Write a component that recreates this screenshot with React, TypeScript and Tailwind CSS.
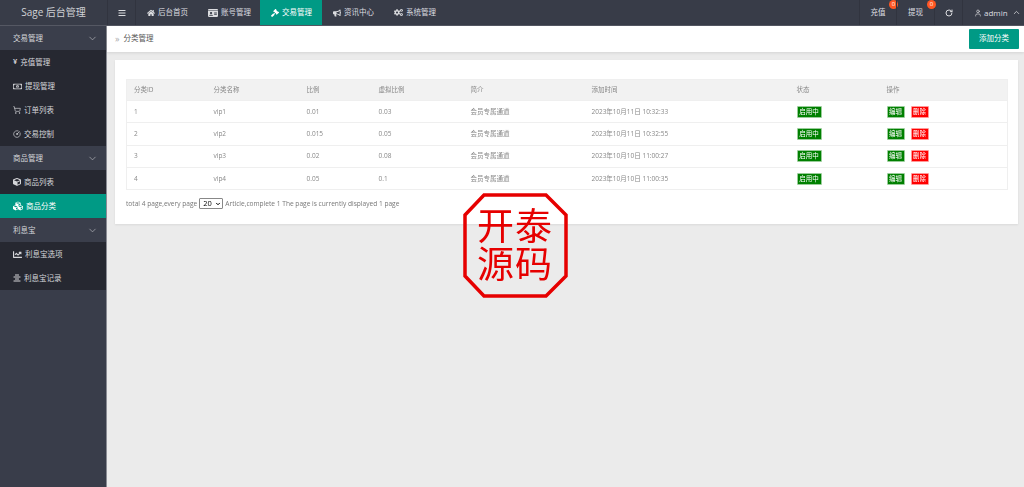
import { ChevronDown, ChevronUp, User, RotateCw, ShoppingCart, CircleGauge } from "lucide-react";
import { FaHome, FaIdCard, FaGavel, FaBullhorn, FaCogs, FaRegMoneyBillAlt, FaCube, FaCubes, FaChartLine, FaBars, FaAlignCenter } from "react-icons/fa";

const font = "font-['Open_Sans','Noto_Sans_CJK_SC',sans-serif]";

const navItems = [
  { label: "后台首页", icon: <FaHome size={8} />, width: "w-[61px]" },
  { label: "账号管理", icon: <FaIdCard size={10} />, width: "w-[63px]" },
  { label: "交易管理", icon: <FaGavel size={8} />, width: "w-[62px]", active: true },
  { label: "资讯中心", icon: <FaBullhorn size={8} />, width: "w-[61px]" },
  { label: "系统管理", icon: <FaCogs size={9} />, width: "w-[63px]" },
];

const rows = [
  { id: 1, name: "vip1", ratio: "0.01", virtual: "0.03", time: "2023年10月11日 10:32:33" },
  { id: 2, name: "vip2", ratio: "0.015", virtual: "0.05", time: "2023年10月11日 10:32:55" },
  { id: 3, name: "vip3", ratio: "0.02", virtual: "0.08", time: "2023年10月10日 11:00:27" },
  { id: 4, name: "vip4", ratio: "0.05", virtual: "0.1", time: "2023年10月10日 11:00:35" },
];

function SideGroup({ label }: { label: string }) {
  return (
    <div className="flex h-6 items-center justify-between bg-[#3a3e4b] pl-[13px] pr-2 text-[7.5px] text-[#d5d6da]">
      <span className="pt-[2px]">{label}</span>
      <ChevronDown size={11} strokeWidth={1.5} className="text-[#b4b6bc]" />
    </div>
  );
}

function SideItem({ label, icon, active }: { label: string; icon: React.ReactNode; active?: boolean }) {
  return (
    <div className={`flex h-6 items-center gap-[3px] pl-[13px] text-[7.5px] text-[#d5d6da] ${active ? "bg-[#009a85] text-white" : "bg-[#262831]"}`}>
      {icon}
      <span className="pt-[2px]">{label}</span>
    </div>
  );
}

function Badge({ color, children, w }: { color: string; children: string; w: string }) {
  return <span className={`inline-flex h-3 items-center justify-center rounded-[1px] border border-white/60 text-[6.5px] text-white ${color} ${w}`}>{children}</span>;
}

export default function App() {
  return (
    <div className={`flex h-screen w-full flex-col overflow-hidden bg-[#ebebeb] ${font}`}>
      {/* top bar */}
      <header className="flex h-[26px] shrink-0 items-stretch border-b border-[#555863] bg-[#383c48] text-[7.5px] text-[#dcdde0]">
        <div className="flex w-[107px] items-center justify-center text-[10px] text-[#d0d2d6]">Sage 后台管理</div>
        <div className="flex w-[29px] items-center justify-center border-x border-[#31343f]">
          <FaBars size={8} />
        </div>
        {navItems.map((item) => (
          <div key={item.label} className={`flex items-center gap-[3px] pl-[11px] ${item.width} ${item.active ? "bg-[#009a85] text-white" : ""}`}>
            {item.icon}
            <span>{item.label}</span>
          </div>
        ))}
        <div className="ml-auto flex items-stretch">
          <div className="relative flex w-[37px] items-center justify-center border-l border-[#31343f]">
            充值
            <span className="absolute left-[29px] top-0 flex h-[9px] w-[9px] items-center justify-center rounded-full bg-[#ff5722] text-[6px] text-white">0</span>
          </div>
          <div className="relative flex w-[38px] items-center justify-center border-l border-[#31343f]">
            提现
            <span className="absolute left-[30px] top-0 flex h-[9px] w-[9px] items-center justify-center rounded-full bg-[#ff5722] text-[6px] text-white">0</span>
          </div>
          <div className="flex w-[29px] items-center justify-center border-x border-[#31343f]">
            <RotateCw size={8} strokeWidth={3} />
          </div>
          <div className="flex w-[61px] items-center gap-[2px] pl-[11px] text-[8px]">
            <User size={8} />
            <span>admin</span>
            <ChevronUp size={9} className="ml-[2px]" />
          </div>
        </div>
      </header>

      <div className="flex min-h-0 flex-1">
        {/* sidebar */}
        <aside className="w-[107px] shrink-0 border-r border-[#8a8c94] bg-[#393d4a]">
          <SideGroup label="交易管理" />
          <SideItem label="充值管理" icon={<span className="font-bold">¥</span>} />
          <SideItem label="提现管理" icon={<FaRegMoneyBillAlt size={9} />} />
          <SideItem label="订单列表" icon={<ShoppingCart size={8} />} />
          <SideItem label="交易控制" icon={<CircleGauge size={8} />} />
          <SideGroup label="商品管理" />
          <SideItem label="商品列表" icon={<FaCube size={8} />} />
          <SideItem label="商品分类" icon={<FaCubes size={10} />} active />
          <SideGroup label="利息宝" />
          <SideItem label="利息宝选项" icon={<FaChartLine size={9} />} />
          <SideItem label="利息宝记录" icon={<FaAlignCenter size={8} />} />
        </aside>

        {/* content */}
        <main className="relative min-w-0 flex-1">
          <div className="flex h-[26px] items-center justify-between bg-white pl-2 pr-[5px] shadow-[0_1px_3px_rgba(0,0,0,0.1)]">
            <div className="flex items-center gap-[4px] text-[7.5px] text-[#555]">
              <span className="text-[9px] text-[#aaa]">»</span>
              <span>分类管理</span>
            </div>
            <button className="flex h-5 w-[50px] items-center justify-center rounded-[1px] bg-[#009a85] text-[7.5px] text-white">添加分类</button>
          </div>

          <section className="ml-2 mr-[6px] mt-2 h-[164px] bg-white px-[11px] pt-[19px] shadow-[0_1px_2px_rgba(0,0,0,0.08)]">
            <table className="w-[882px] table-fixed border border-[#efefef] text-left text-[6.5px] text-[#888] will-change-transform">
              <thead>
                <tr className="h-[21px] bg-[#f2f2f2]">
                  <th className="w-[79px] pl-[7px] font-normal">分类ID</th>
                  <th className="w-[93px] pl-2 font-normal">分类名称</th>
                  <th className="w-[72px] pl-2 font-normal">比例</th>
                  <th className="w-[93px] pl-2 font-normal">虚拟比例</th>
                  <th className="w-[120px] pl-[7px] font-normal">简介</th>
                  <th className="w-[206px] pl-2 font-normal">添加时间</th>
                  <th className="w-[90px] pl-[7px] font-normal">状态</th>
                  <th className="pl-[7px] font-normal">操作</th>
                </tr>
              </thead>
              <tbody>
                {rows.map((r) => (
                  <tr key={r.id} className="h-[22.3px] border-t border-[#efefef]">
                    <td className="pl-[7px]">{r.id}</td>
                    <td className="pl-2">{r.name}</td>
                    <td className="pl-2">{r.ratio}</td>
                    <td className="pl-2">{r.virtual}</td>
                    <td className="pl-[7px]">会员专属通道</td>
                    <td className="pl-2">{r.time}</td>
                    <td className="pl-[7px]">
                      <Badge color="bg-[#008000]" w="w-[25px]">启用中</Badge>
                    </td>
                    <td className="pl-[7px]">
                      <div className="flex gap-[6px]">
                        <Badge color="bg-[#008000]" w="w-[18px]">编辑</Badge>
                        <Badge color="bg-[#ff0000]" w="w-[18px]">删除</Badge>
                      </div>
                    </td>
                  </tr>
                ))}
              </tbody>
            </table>
            <div className="mt-2 flex items-center gap-[2px] text-[6.6px] text-[#777] will-change-transform">
              <span>total 4 page,every page</span>
              <div className="relative h-[11px] w-6">
                <select defaultValue="20" className="h-full w-full appearance-none rounded-[1px] border border-[#888] bg-white pl-[3px] text-[7.5px] leading-none text-black">
                  <option value="20">20</option>
                </select>
                <ChevronDown size={6} strokeWidth={4} className="pointer-events-none absolute right-[2px] top-[3px] text-black" />
              </div>
              <span>Article,complete 1 The page is currently displayed 1 page</span>
            </div>
          </section>

          {/* seal over the content */}
          <div className="absolute left-[356px] top-[167px] h-[105px] w-[105px]">
            <svg viewBox="0 0 105 105" className="h-full w-full">
              <polygon points="21,2 83,2 103,22 103,83 83,103 21,103 2,83 2,22" fill="none" stroke="#e60000" strokeWidth="3.5" />
            </svg>
            <div className="absolute left-[14px] top-[16px] grid grid-cols-[38px_38px] font-['Liberation_Serif','Noto_Sans_CJK_SC',serif] text-[37px] leading-[38px] text-[#e60000]">
              <span>开</span>
              <span>泰</span>
              <span>源</span>
              <span>码</span>
            </div>
          </div>
        </main>
      </div>
    </div>
  );
}
